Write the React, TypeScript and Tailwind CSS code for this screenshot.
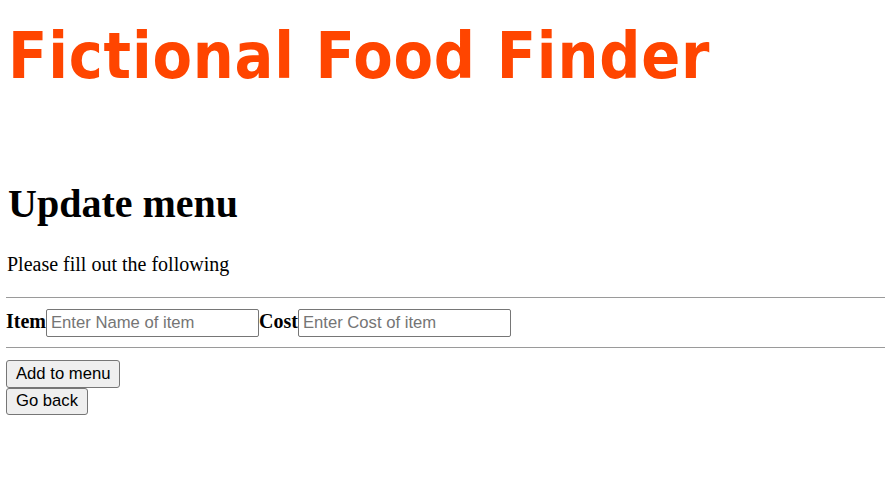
export default function App() {
  return (
    <div className="w-[886px] h-[482px] bg-white pl-[6px] pr-[1px] overflow-hidden">
      <h1 className="pt-[24px] pl-[2px] text-[64px] leading-[64px] tracking-[0.8px] font-bold text-[#ff4500] whitespace-nowrap font-['DejaVu_Sans_Condensed','DejaVu_Sans',sans-serif]">
        Fictional Food Finder
      </h1>
      <h2 className="mt-[95.5px] pl-[2px] text-[40px] leading-[40px] font-bold text-black font-['Liberation_Serif',serif]">
        Update menu
      </h2>
      <p className="mt-[30.5px] pl-[1px] text-[20px] leading-[20px] text-black font-['Liberation_Serif',serif]">
        Please fill out the following
      </p>
      <div className="mt-[23px] h-px bg-[#9a9a9a]" />
      <div className="mt-[11px] flex items-start font-['Liberation_Serif',serif]">
        <span className="mt-[2px] text-[20px] leading-[20px] font-bold text-black">Item</span>
        <input
          className="w-[213px] h-[28px] border border-[#767676] rounded-[2px] px-[4px] text-[16.67px] text-black placeholder:text-[#757575] outline-none font-['Liberation_Sans',Arial,sans-serif]"
          placeholder="Enter Name of item"
        />
        <span className="mt-[2px] text-[20px] leading-[20px] font-bold text-black">Cost</span>
        <input
          className="w-[213px] h-[28px] border border-[#767676] rounded-[2px] px-[4px] text-[16.67px] text-black placeholder:text-[#757575] outline-none font-['Liberation_Sans',Arial,sans-serif]"
          placeholder="Enter Cost of item"
        />
      </div>
      <div className="mt-[10px] h-px bg-[#9a9a9a]" />
      <div className="mt-[12px] flex flex-col items-start font-['Liberation_Sans',Arial,sans-serif]">
        <button className="h-[28px] px-[9px] bg-[#efefef] border border-[#767676] rounded-[3px] text-[16.67px] leading-none text-black">
          Add to menu
        </button>
        <button className="h-[27px] px-[9px] bg-[#efefef] border border-[#767676] rounded-[3px] text-[16.67px] leading-none text-black">
          Go back
        </button>
      </div>
    </div>
  );
}
